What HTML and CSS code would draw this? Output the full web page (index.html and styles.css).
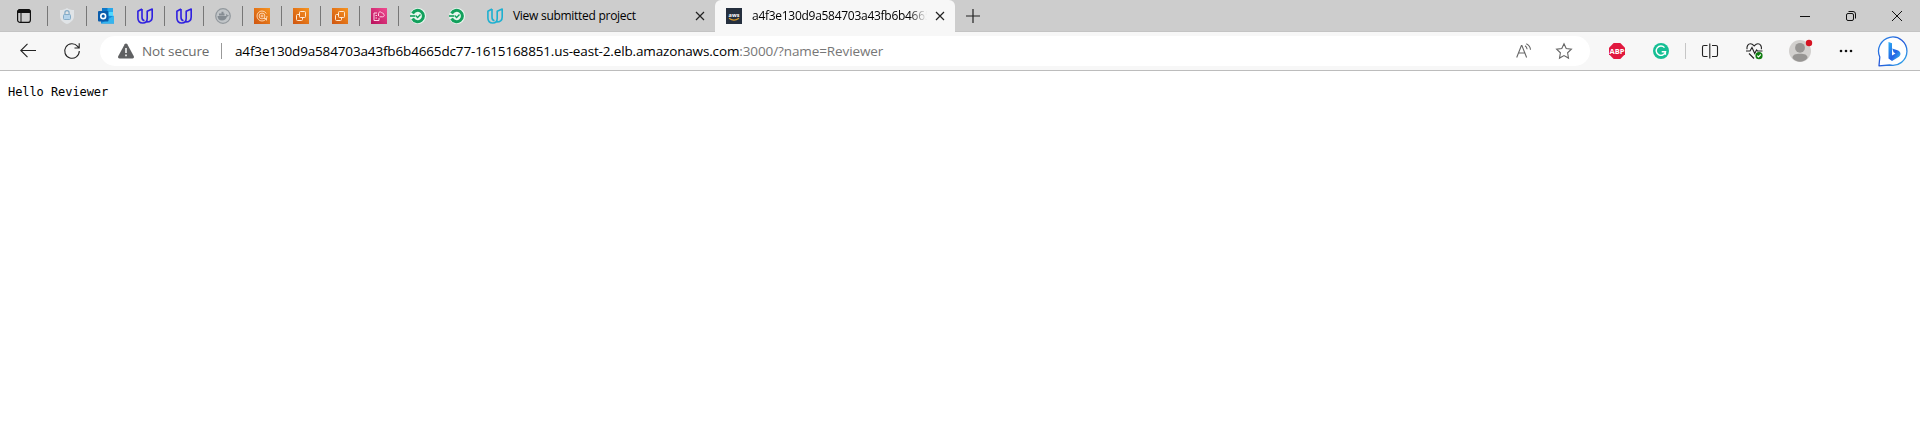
FILE: index.html
```html
<!DOCTYPE html>
<html lang="en">
<head>
<meta charset="utf-8">
<title>Browser</title>
<link rel="stylesheet" href="styles.css">
</head>
<body>
<svg class="defs" width="0" height="0">
  <defs>
    <linearGradient id="orange" x1="0" y1="1" x2="1" y2="0"><stop offset="0" stop-color="#cf5510"/><stop offset="1" stop-color="#f79420"/></linearGradient>
    <linearGradient id="pink" x1="0" y1="1" x2="1" y2="0"><stop offset="0" stop-color="#b8105c"/><stop offset="1" stop-color="#f04c90"/></linearGradient>
    <linearGradient id="bing" x1="0" y1="0" x2="1" y2="1"><stop offset="0" stop-color="#2a8de8"/><stop offset=".5" stop-color="#2456d8"/><stop offset="1" stop-color="#35b8ee"/></linearGradient>
    <linearGradient id="bingb" x1="0" y1="0" x2="1" y2="1"><stop offset="0" stop-color="#2cb0f4"/><stop offset=".55" stop-color="#2460e4"/><stop offset="1" stop-color="#38c4f0"/></linearGradient>
    <symbol id="udacity" viewBox="0 0 16 16"><path d="M5 1 .9 3.200V9.800c0 3.200 2 5.200 4.900 5.200 3.100 0 4.400-2.200 4.400-4.700V3.200L15.200 1v8c0 3.200-2 5-5.600 5M5 1v8.300c0 2 .9 3.200 2.500 3.500" fill="none" stroke="currentColor" stroke-width="1.600" stroke-linejoin="round"/></symbol>
    <symbol id="ec2" viewBox="0 0 16 16"><path d="M0 0h16v16H0z" fill="url(#orange)"/><g fill="none" stroke="#ffe9d0"><rect x="6.500" y="3.500" width="6" height="6" rx="1"/><path d="M9.500 9.500v2a1 1 0 0 1-1 1h-4a1 1 0 0 1-1-1v-4a1 1 0 0 1 1-1h2"/></g></symbol>
    <symbol id="circle" viewBox="0 0 16 16"><circle cx="8" cy="8" r="8" fill="#e9f7ef"/><path d="M2.600 5.500A5.700 5.700 0 1 1 2.600 10.500" fill="none" stroke="#12a05c" stroke-width="3"/><path d="M0 8h5" stroke="#12a05c" stroke-width="1.600"/><path d="m5.600 7.600 2 1.900L10.500 6.500" fill="none" stroke="#12a05c" stroke-width="1.400"/></symbol>
  </defs>
</svg>

<header class="tabs">
  <div class="tab-actions"><svg class="icon" viewBox="0 0 16 16"><rect x="1.600" y="1.600" width="12.800" height="12.800" rx="2.500" fill="none" stroke="#111" stroke-width="1.200"/><path d="M1.500 4.500V4a2.500 2.500 0 0 1 2.500-2.500h8A2.500 2.500 0 0 1 14.500 4v.5z" fill="#111" stroke="#111"/><path d="M5 5v9.500" stroke="#111"/></svg></div>
  <div class="pin"><svg class="icon" viewBox="0 0 16 16"><path d="M8 0c2 1.500 4 2 7 2v6c0 4-3 6.500-7 8-4-1.500-7-4-7-8V2c3 0 5-.5 7-2z" fill="#e0e4e7"/><rect x="4.500" y="6.500" width="7" height="5" rx="1" fill="#b4d3ea" stroke="#84acc8"/><path d="M5.900 6.500V4.800a2.100 2.100 0 0 1 4.200 0v1.700" fill="none" stroke="#84acc8" stroke-width="1.200"/></svg></div>
  <div class="pin"><svg class="icon" viewBox="0 0 16 16"><path d="M4 0h11v8H4z" fill="#28a8ea"/><path d="M4 0h5.500v4H4z" fill="#0f78c8"/><path d="M9.500 4H15v4H9.500z" fill="#50d9ff"/><path d="M3 7.500 16 8v7.500H3z" fill="#1689dc"/><path d="m3 15.500 13-8v8z" fill="#35b5ee"/><rect y="3" width="10.500" height="10.500" rx="1" fill="#0a5cab"/><circle cx="5.200" cy="8.200" r="2.400" fill="none" stroke="#fff" stroke-width="1.600"/></svg></div>
  <div class="pin violet"><svg class="icon"><use href="#udacity"/></svg></div>
  <div class="pin violet"><svg class="icon"><use href="#udacity"/></svg></div>
  <div class="pin"><svg class="icon" viewBox="0 0 16 16"><circle cx="8" cy="8" r="7.300" fill="#c1c5c8" stroke="#92989d" stroke-width="1.200"/><path d="M2.500 8h8.500c.6-.4.500-1.500 0-2 .9 0 1.300.6 1.500 1.300h1.500c-.5 1-1.200 1.200-2 1.200-.7 2.500-2.500 4-5 4-2.700 0-4.300-1.500-4.500-4.500zM4 5.600h5.500v2H4zM6.500 3.700h2v2h-2z" fill="#858c92"/></svg></div>
  <div class="pin"><svg class="icon" viewBox="0 0 16 16"><path d="M0 0h16v16H0z" fill="url(#orange)"/><g fill="none" stroke="#ffe0bd" stroke-width=".9"><circle cx="8" cy="8" r="5" stroke-dasharray="28 3.400"/><circle cx="8" cy="8" r="2.900"/><circle cx="8" cy="8" r="1"/><path d="M10 10.500h2.500v2"/></g></svg></div>
  <div class="pin"><svg class="icon"><use href="#ec2"/></svg></div>
  <div class="pin"><svg class="icon"><use href="#ec2"/></svg></div>
  <div class="pin"><svg class="icon" viewBox="0 0 16 16"><path d="M0 0h16v16H0z" fill="url(#pink)"/><path d="M6 5H3v7.500h5V10M4.500 7.500H6M4.500 10H6M7.500 8V5.500c0-1.500 2-2.200 3-.9 1 0 1.500.5 1.500 1.200 2 .5 1.500 3-.3 3H8.500" fill="none" stroke="#ffd2e6"/></svg></div>
  <div class="pin"><svg class="icon"><use href="#circle"/></svg></div>
  <div class="pin plain"><svg class="icon"><use href="#circle"/></svg></div>
  <div class="tab"><svg class="icon cyan"><use href="#udacity"/></svg><span class="title">View submitted project</span><svg class="close" viewBox="0 0 10 10"><path d="m1 1 8 8M9 1 1 9"/></svg></div>
  <div class="tab active"><svg class="icon" viewBox="0 0 16 16"><path d="M0 0h16v16H0z" fill="#252f3e"/><text x="8" y="8.500" text-anchor="middle" class="aws">aws</text><path d="M3 10.300c3 2.200 7 2.200 10 0" fill="none" stroke="#d99a2b" stroke-width="1.100"/></svg><span class="title faded">a4f3e130d9a584703a43fb6b4665</span><svg class="close" viewBox="0 0 10 10"><path d="m1 1 8 8M9 1 1 9"/></svg></div>
  <svg class="new-tab" viewBox="0 0 14 14"><path d="M7 0v14M0 7h14"/></svg>
  <div class="window-controls">
    <svg viewBox="0 0 10 10"><path d="M0 5.500h10"/></svg>
    <svg viewBox="0 0 10 10"><rect x=".5" y="2.500" width="7" height="7" rx="1.500"/><path d="M2.500.5H7A2.500 2.500 0 0 1 9.500 3v4.500"/></svg>
    <svg viewBox="0 0 10 10"><path d="m0 0 10 10M10 0 0 10"/></svg>
  </div>
</header>

<nav class="toolbar">
  <svg class="back line" viewBox="0 0 16 16"><path d="M16 7.500H.8M7.500.8.8 7.500l6.700 6.700"/></svg>
  <svg class="reload line" viewBox="0 0 16 16"><path d="M15.300 8A7.300 7.300 0 1 1 13.600 3.300L15 5M15.200.3V5h-4.700"/></svg>
  <div class="address">
    <svg class="icon warn" viewBox="0 0 16 16"><path d="M8 .5c.6 0 1 .3 1.300.8l6.500 12c.5 1-.1 2.200-1.300 2.200h-13C.3 15.500-.3 14.300.2 13.300l6.500-12C7 .8 7.400.5 8 .5z" fill="#5f6062"/><path d="M8 5v5M8 11.500v1.700" stroke="#fff" stroke-width="1.500"/></svg>
    <span class="security">Not secure</span>
    <span class="rule"></span>
    <span class="url"><span class="host">a4f3e130d9a584703a43fb6b4665dc77-1615168851.us-east-2.elb.amazonaws.com</span><span class="path">:3000/?name=Reviewer</span></span>
    <svg class="icon read" viewBox="0 0 16 16"><path d="M.7 14.500 5.400 2.500h.5l4.700 12M2.500 10h6.300M9 2.700c1.300.8 2 1.800 2.100 3.500M10.300.7c2.500 1.200 4 3 4.200 6"/></svg>
    <svg class="icon star" viewBox="0 0 16 16"><path d="m8 .8 2.200 4.700 5.200.7-3.800 3.600.9 5.300L8 12.600l-4.500 2.500.9-5.300L.6 6.200l5.200-.7z"/></svg>
  </div>
  <svg class="icon abp" viewBox="0 0 16 16"><path d="M4.700 0h6.600L16 4.700v6.600L11.300 16H4.700L0 11.300V4.700z" fill="#e1193f"/><text x="8" y="10.800" text-anchor="middle" class="abp-text">ABP</text></svg>
  <svg class="icon grammarly" viewBox="0 0 16 16"><circle cx="8" cy="8" r="8" fill="#15bf94"/><path d="M11.500 4.600A4.700 4.700 0 1 0 12.500 8.800H8.700M12.400 8.800v3" fill="none" stroke="#fff" stroke-width="1.400"/></svg>
  <span class="tool-rule"></span>
  <svg class="icon split line" viewBox="0 0 16 16"><path d="M5.500 2.500H2a1.500 1.500 0 0 0-1.500 1.500v8A1.500 1.500 0 0 0 2 13.500h3.500M10 2.500h4A1.500 1.500 0 0 1 15.500 4v8a1.500 1.500 0 0 1-1.500 1.500h-4M7.800.5v15"/></svg>
  <svg class="health line" viewBox="0 0 17 16"><path d="M1 6.200C.6 3.200 2 .8 4.500.8 6.500.8 7.300 2 8.200 3c.9-1 1.700-2.200 3.700-2.200 2.500 0 3.900 2.400 3.500 5.400M0 8h4l2-3.500 2.700 6L10.500 7l1 1h5M3 10.500 8 15.500"/><circle cx="13" cy="12.700" r="3.600" fill="#107c10" stroke="none"/><path d="m11.200 12.700 1.300 1.200 2.300-2.400" stroke="#fff"/></svg>
  <svg class="profile" viewBox="0 0 24 24"><circle cx="11" cy="13" r="11" fill="#d2d0ce"/><circle cx="11" cy="9.800" r="4.900" fill="#979593"/><path d="M3.500 20c0-3.500 3-4.300 7.500-4.300s7.500.8 7.500 4.300c-4 5-11 5-15 0z" fill="#979593"/><circle cx="20" cy="5" r="3.200" fill="#d51322"/></svg>
  <svg class="more" viewBox="0 0 14 4"><circle cx="2" cy="2" r="1.300"/><circle cx="7" cy="2" r="1.300"/><circle cx="12" cy="2" r="1.300"/></svg>
  <svg class="bing" viewBox="0 0 31 31"><path d="M1 29.800 1.800 21A14.200 14.200 0 1 1 11.500 29z" fill="#fff" stroke="url(#bing)" stroke-width="1.300" stroke-linejoin="round"/><path d="M10.500 6 14 7.300v12.200l3.500-2.100-2-1.200L14.200 12.500l6 2.100c3 1.500 2.800 4.800.8 6.200L14 25l-3.500-2.400z" fill="url(#bingb)"/></svg>
</nav>
<main><pre class="message">Hello Reviewer</pre></main>
</body>
</html>
```
FILE: styles.css
```css
* { box-sizing: border-box; }
body { margin: 0; background: #fff; color: #000; font-family: "Open Sans", "Noto Sans", sans-serif; overflow: hidden; }
svg { display: block; flex: none; overflow: visible; }
.defs { position: absolute; }
.icon { width: 16px; height: 16px; }
.line { fill: none; stroke: #222; stroke-width: 1.100; }

.tabs { display: flex; align-items: center; height: 32px; background: #cdcdcd; border-bottom: 1px solid #c4c4c4; }
.tab-actions { width: 47px; padding-left: 16px; }
.pin { display: flex; align-items: center; width: 39px; height: 20px; padding-left: 11px; border-left: 1px solid #777; }
.pin.plain { border-color: transparent; }
.violet { color: #2f20e0; }
.cyan { color: #1eb0d0; }
.tab { display: flex; align-items: center; width: 239px; height: 32px; padding: 0 10px 0 11px; font-size: 12px; letter-spacing: -.28px; }
.tab.active { width: 240px; background: #f7f7f7; border-radius: 6px 6px 0 0; }
.title { flex: 1; margin: 0 8px 0 10px; white-space: nowrap; line-height: 18px; }
.faded { flex: 0 0 175px; min-width: 0; margin-right: 8px; -webkit-mask-image: linear-gradient(90deg, #000 90%, transparent 100%); mask-image: linear-gradient(90deg, #000 90%, transparent 100%); }
.close { width: 10px; height: 10px; margin-left: auto; fill: none; stroke: #222; stroke-width: 1.200; }
.new-tab { width: 14px; height: 14px; margin-left: 11px; stroke: #222; stroke-width: 1.200; }
.window-controls { display: flex; gap: 36px; margin-left: auto; padding-right: 18px; }
.window-controls svg { width: 10px; height: 10px; fill: none; stroke: #111; }
.aws { font: 700 5.500px "Open Sans", sans-serif; fill: #fff; letter-spacing: 0; }

.toolbar { display: flex; align-items: center; height: 39px; padding-left: 20px; background: #f7f7f7; border-bottom: 1px solid #bcbcbc; }
.back { width: 16px; height: 16px; }
.reload { width: 16px; height: 16px; margin-left: 28px; }
.address { display: flex; align-items: center; width: 1490px; height: 30px; margin-left: 20px; padding: 0 18px; border-radius: 15px; background: #fff; font-size: 13.500px; line-height: 20px; white-space: nowrap; }
.security { width: 67px; margin-left: 8px; color: #6b6b6b; letter-spacing: -.12px; }
.rule { width: 1px; height: 16px; margin: 0 13px 0 12px; background: #999; }
.host { letter-spacing: -.15px; }
.path { color: #777; letter-spacing: -.1px; }
.read { margin-left: auto; }
.read, .star { fill: none; stroke: #666; stroke-width: 1.100; }
.star { margin-left: 24px; }
.abp { margin-left: 19px; }
.abp-text { font: 700 7.500px "Open Sans", sans-serif; fill: #fff; }
.grammarly { margin-left: 28px; }
.tool-rule { width: 1px; height: 16px; margin: 0 16px; background: #c6c6c6; }
.health { width: 17px; height: 16px; margin-left: 28px; }
.profile { width: 24px; height: 24px; margin: -2px 0 0 26px; }
.more { width: 14px; height: 4px; margin-left: 26px; fill: #111; }
.bing { width: 31px; height: 31px; margin-left: 25px; }

.message { margin: 13px 0 0 8px; font: 12px/16px "DejaVu Sans Mono", monospace; letter-spacing: -.07px; color: #000; }
```
